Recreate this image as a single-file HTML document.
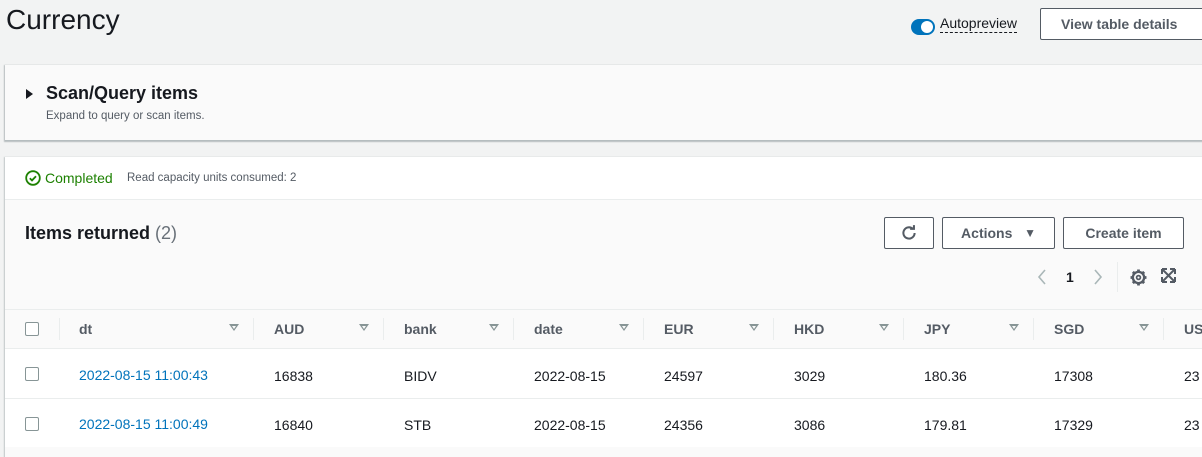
<!DOCTYPE html>
<html><head><meta charset="utf-8"><style>
*{box-sizing:border-box;margin:0;padding:0}
body{width:1202px;height:447px;overflow:hidden;background:#f2f3f3;font-family:"Liberation Sans",Arial,sans-serif;color:#16191f;position:relative}
.abs{position:absolute}
h1{position:absolute;left:6px;top:4px;font-size:28px;font-weight:400;color:#16191f}
.btn{position:absolute;border:1px solid #545b64;border-radius:2px;background:#fff;font-weight:700;font-size:14px;color:#545b64;display:flex;align-items:center;justify-content:center}
.p1{left:5px;top:65px;width:1210px;height:75px;background:#fafafa;box-shadow:0 1px 1px 1px rgba(0,28,36,.25)}
.p2{left:5px;top:157px;width:1210px;height:300px;background:#fafafa;box-shadow:0 1px 1px 1px rgba(0,28,36,.2)}
.th{position:absolute;top:310px;height:38px;font-weight:700;font-size:14px;color:#545b64;display:flex;align-items:center}
.div{position:absolute;top:318px;width:1px;height:22px;background:#eaeded}
.tri{position:absolute;top:324px;width:0;height:0;border-left:5px solid transparent;border-right:5px solid transparent;border-top:7px solid #879596}
.tri:after{content:"";position:absolute;left:-2.5px;top:-5.5px;border-left:2.5px solid transparent;border-right:2.5px solid transparent;border-top:3.5px solid #fafafa}
.cell{position:absolute;font-size:14px;color:#16191f}
.cb{position:absolute;left:25px;width:14px;height:14px;border:1px solid #879596;border-radius:2px;background:#fff}
</style></head><body>
<h1>Currency</h1>
<div class="abs" style="left:911px;top:19px;width:24px;height:16px;border-radius:8px;background:#0073bb"><div class="abs" style="right:2px;top:2px;width:12px;height:12px;border-radius:6px;background:#fff"></div></div>
<div class="abs" style="left:940px;top:15px;font-size:14px;color:#16191f;border-bottom:1px dashed #16191f;line-height:17px">Autopreview</div>
<div class="btn" style="left:1040px;top:8px;width:170px;height:32px;justify-content:flex-start;padding-left:20px">View table details</div>

<div class="abs p1"></div>
<div class="abs" style="left:26px;top:89px;width:0;height:0;border-top:5px solid transparent;border-bottom:5px solid transparent;border-left:7px solid #16191f"></div>
<div class="abs" style="left:46px;top:83px;font-size:18px;font-weight:700">Scan/Query items</div>
<div class="abs" style="left:46px;top:110px;font-size:11.5px;color:#545b64">Expand to query or scan items.</div>

<div class="abs p2"></div>
<div class="abs" style="left:5px;top:157px;width:1210px;height:43px;background:#fff;border-bottom:1px solid #eaeded"></div>
<svg class="abs" style="left:25px;top:170px" width="16" height="16" viewBox="0 0 16 16"><circle cx="8" cy="8" r="6.8" fill="none" stroke="#1d8102" stroke-width="1.8"/><path d="M4.8 8.2l2.2 2.2 4-4.2" fill="none" stroke="#1d8102" stroke-width="1.8"/></svg>
<div class="abs" style="left:45px;top:170px;font-size:14px;color:#1d8102">Completed</div>
<div class="abs" style="left:127px;top:172px;font-size:11.5px;color:#545b64">Read capacity units consumed: 2</div>

<div class="abs" style="left:25px;top:223px;font-size:18px;font-weight:700">Items returned <span style="font-weight:400;color:#687078">(2)</span></div>
<div class="btn" style="left:884px;top:217px;width:50px;height:32px"><svg width="18" height="18" viewBox="0 0 16 16"><path d="M13 8a5 5 0 1 1-1.6-3.7" fill="none" stroke="#545b64" stroke-width="1.8"/><path d="M9 4.3h3.4V1" fill="none" stroke="#545b64" stroke-width="1.8"/></svg></div>
<div class="btn" style="left:942px;top:217px;width:113px;height:32px">Actions&nbsp;&nbsp;&nbsp;<span style="font-size:12px">▼</span></div>
<div class="btn" style="left:1063px;top:217px;width:121px;height:32px">Create item</div>
<svg class="abs" style="left:1037px;top:269px" width="10" height="16" viewBox="0 0 10 16"><path d="M8 1L2 8l6 7" fill="none" stroke="#aab7b8" stroke-width="1.6"/></svg>
<div class="abs" style="left:1066px;top:269px;font-size:14px;font-weight:700">1</div>
<svg class="abs" style="left:1093px;top:269px" width="10" height="16" viewBox="0 0 10 16"><path d="M2 1l6 7-6 7" fill="none" stroke="#aab7b8" stroke-width="1.6"/></svg>
<div class="abs" style="left:1117px;top:262px;width:1px;height:30px;background:#eaeded"></div>
<svg class="abs" style="left:1130px;top:269px" width="17" height="17" viewBox="0 0 16 16"><circle cx="8" cy="8" r="5.3" fill="none" stroke="#545b64" stroke-width="2.2"/><g stroke="#545b64" stroke-width="2.6"><path d="M8 0.5v3M8 12.5v3M0.5 8h3M12.5 8h3M2.7 2.7l2.1 2.1M11.2 11.2l2.1 2.1M2.7 13.3l2.1-2.1M11.2 4.8l2.1-2.1"/></g><circle cx="8" cy="8" r="4" fill="#fafafa"/><circle cx="8" cy="8" r="1.8" fill="none" stroke="#545b64" stroke-width="1.6"/></svg>
<svg class="abs" style="left:1161px;top:268px" width="15" height="15" viewBox="0 0 15 15"><path d="M1 1h5M1 1v5M14 1h-5M14 1v5M1 14h5M1 14v-5M14 14h-5M14 14v-5M2 2l11 11M13 2L2 13" fill="none" stroke="#545b64" stroke-width="2"/></svg>

<div class="abs" style="left:5px;top:309px;width:1210px;height:1px;background:#eaeded"></div>
<div class="abs" style="left:5px;top:348px;width:1210px;height:99px;background:#fff"></div>
<div class="abs" style="left:5px;top:348px;width:1210px;height:1px;background:#eaeded"></div>
<div class="abs" style="left:5px;top:398px;width:1210px;height:1px;background:#eaeded"></div>

<div class="cb" style="top:322px"></div>
<div class="cb" style="top:367px"></div>
<div class="cb" style="top:417px"></div>
<div class="div" style="left:59px"></div>

<div class="th" style="left:79px">dt</div><div class="tri" style="left:229px"></div><div class="div" style="left:253px"></div>
<div class="th" style="left:274px">AUD</div><div class="tri" style="left:359px"></div><div class="div" style="left:383px"></div>
<div class="th" style="left:404px">bank</div><div class="tri" style="left:489px"></div><div class="div" style="left:513px"></div>
<div class="th" style="left:534px">date</div><div class="tri" style="left:619px"></div><div class="div" style="left:643px"></div>
<div class="th" style="left:664px">EUR</div><div class="tri" style="left:749px"></div><div class="div" style="left:773px"></div>
<div class="th" style="left:794px">HKD</div><div class="tri" style="left:879px"></div><div class="div" style="left:903px"></div>
<div class="th" style="left:924px">JPY</div><div class="tri" style="left:1009px"></div><div class="div" style="left:1033px"></div>
<div class="th" style="left:1054px">SGD</div><div class="tri" style="left:1139px"></div><div class="div" style="left:1163px"></div>
<div class="th" style="left:1184px">USD</div>

<div class="cell" style="left:79px;top:367px;color:#0073bb">2022-08-15 11:00:43</div>
<div class="cell" style="left:274px;top:368px">16838</div>
<div class="cell" style="left:404px;top:368px">BIDV</div>
<div class="cell" style="left:534px;top:368px">2022-08-15</div>
<div class="cell" style="left:664px;top:368px">24597</div>
<div class="cell" style="left:794px;top:368px">3029</div>
<div class="cell" style="left:924px;top:368px">180.36</div>
<div class="cell" style="left:1054px;top:368px">17308</div>
<div class="cell" style="left:1184px;top:368px">23</div>

<div class="cell" style="left:79px;top:416px;color:#0073bb">2022-08-15 11:00:49</div>
<div class="cell" style="left:274px;top:417px">16840</div>
<div class="cell" style="left:404px;top:417px">STB</div>
<div class="cell" style="left:534px;top:417px">2022-08-15</div>
<div class="cell" style="left:664px;top:417px">24356</div>
<div class="cell" style="left:794px;top:417px">3086</div>
<div class="cell" style="left:924px;top:417px">179.81</div>
<div class="cell" style="left:1054px;top:417px">17329</div>
<div class="cell" style="left:1184px;top:417px">23</div>
</body></html>
